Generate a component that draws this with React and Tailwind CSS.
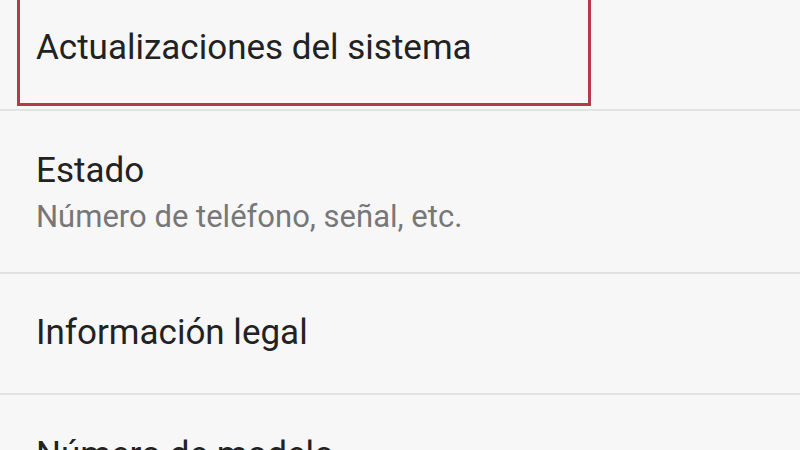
import React from 'react';

export default function App() {
  return (
    <div className="w-[800px] h-[450px] overflow-hidden bg-[#f7f7f7] font-['Roboto',sans-serif]">
      <div className="-mt-[11px]">
        {/* Highlighted row */}
        <div className="h-[122px] border-b-2 border-[#e2e2e2] pl-[17px] pr-[209px] pb-[3px]">
          <div className="h-full border-[3px] border-[#b23a4a] flex items-center pl-[16px] pt-[2px]">
            <span className="text-[35px] text-[#222]">Actualizaciones del sistema</span>
          </div>
        </div>

        <div className="h-[163px] border-b-2 border-[#e2e2e2] flex flex-col pl-[36px] pt-[37px]">
          <span className="text-[35px] leading-[46px] text-[#222]">Estado</span>
          <span className="mt-[3px] text-[31px] leading-[40px] text-[#777]">Número de teléfono, señal, etc.</span>
        </div>

        <div className="h-[121px] border-b-2 border-[#e2e2e2] flex items-center pl-[36px]">
          <span className="text-[35px] text-[#222]">Información legal</span>
        </div>

        <div className="h-[120px] flex items-center pl-[36px]">
          <span className="text-[35px] text-[#222]">Número de modelo</span>
        </div>
      </div>
    </div>
  );
}
